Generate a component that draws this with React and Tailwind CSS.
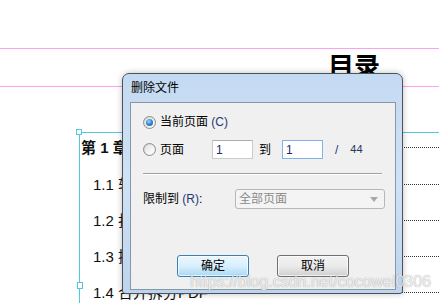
import React from 'react';

const cjk = "font-['Liberation_Sans','Noto_Sans_CJK_SC',sans-serif]";

function Radio({ checked }) {
  return (
    <div className="w-[13px] h-[13px] rounded-full border border-[#8b8e91] bg-gradient-to-br from-[#cfd1d3] to-[#fbfbfb] flex items-center justify-center shrink-0">
      <div className="w-[9px] h-[9px] rounded-full bg-gradient-to-br from-[#e4e4e4] to-[#ffffff] flex items-center justify-center">
        {checked && (
          <div className="w-[7px] h-[7px] rounded-full bg-[radial-gradient(circle_at_40%_35%,#9fd4ff_0%,#3a8ad4_45%,#144f8c_100%)]" />
        )}
      </div>
    </div>
  );
}

function TocRow({ label, bold, indent, className }) {
  return (
    <div className={`flex items-center ${className}`}>
      <span className={`whitespace-nowrap text-[15px] leading-none text-[#111] ${bold ? 'font-bold' : ''} ${indent ? 'pl-[13px]' : 'pl-[1px]'}`}>
        {label}
      </span>
      <div className="flex-1 ml-[4px] border-t border-dotted border-[#333]" />
    </div>
  );
}

export default function App() {
  return (
    <div className={`relative w-[439px] h-[303px] overflow-hidden bg-white ${cjk}`}>
      {/* document page behind the dialog */}
      <div className="pt-[48px]">
        <div className="h-px bg-[#ff9ff0]" />
        <div className="h-[37px] pl-[328px] pt-[5px]">
          <span className="text-[26px] font-bold leading-none text-black">目录</span>
        </div>
        <div className="h-px bg-[#ff9ff0]" />
        <div className="relative mt-[45px] ml-[79px] border-t border-l border-[#4fc8e0]">
          <TocRow label="第 1 章  软件概述" bold className="h-[29px]" />
          <TocRow label="1.1 软件介绍" indent className="h-[36px] mt-[4px]" />
          <TocRow label="1.2 打开PDF文件" indent className="h-[36px]" />
          <TocRow label="1.3 插入删除页面" indent className="h-[36px]" />
          <TocRow label="1.4 合并拆分PDF" indent className="h-[36px]" />
          <div className="absolute -left-[4px] -top-[4px] w-[6px] h-[6px] border border-[#4fc8e0] bg-white" />
          <div className="absolute -left-[3px] top-[149px] w-[6px] h-[7px] border border-[#4fc8e0] bg-white" />
        </div>
      </div>

      {/* delete pages dialog */}
      <div className="absolute left-[122px] top-[73px] w-[281px] h-[221px] flex flex-col rounded-t-[7px] rounded-b-[3px] border border-[#4d5259] bg-gradient-to-b from-[#c4daf2] via-[#cfe2f6] to-[#bcd4ee] shadow-[0_0_6px_rgba(0,0,0,0.25)]">
        <div className="h-[28px] pl-[8px] flex items-center text-[12px] text-black">删除文件</div>
        <div className="ml-[7px] mr-[6px] h-[188px] border border-[#8797a8] bg-[#f0f0f0] pl-[12px] pt-[9px] text-[12px] text-black">
          <div className="h-[20px] flex items-center gap-[4px]">
            <Radio checked />
            <span>当前页面 <span className="text-[#1f3778]">(C)</span></span>
          </div>

          <div className="mt-[8px] h-[19px] flex items-center">
            <div className="w-[69px] flex items-center gap-[4px]">
              <Radio />
              <span>页面</span>
            </div>
            <div className="w-[41px] h-[19px] border border-[#c9cbcf] border-t-[#abadb3] bg-white pl-[3px] flex items-center text-[#1a2a66]">1</div>
            <span className="ml-[6px]">到</span>
            <div className="ml-[11px] w-[41px] h-[19px] border border-[#7eb4ea] bg-white pl-[3px] flex items-center text-[#1a2a66]">1</div>
            <span className="ml-[12px] text-[#1f3778]">/</span>
            <span className="ml-[12px] text-[11px] text-[#26375a]">44</span>
          </div>

          <div className="mt-[14px] w-[239px] h-px bg-[#a0a0a0]" />
          <div className="w-[239px] h-px bg-white" />

          <div className="mt-[14px] h-[20px] flex items-center">
            <span className="w-[92px]">限制到 <span className="text-[#1f3778]">(R)</span>:</span>
            <div className="w-[150px] h-[20px] rounded-[3px] border border-[#b4b8bb] bg-[#f4f4f4] pl-[3px] pr-[6px] flex items-center justify-between text-[#8a8a8a]">
              <span>全部页面</span>
              <svg width="8" height="5" viewBox="0 0 8 5"><path d="M0 0h8L4 5z" fill="#a9a9a9" /></svg>
            </div>
          </div>

          <div className="mt-[46px] flex">
            <button className="ml-[34px] w-[72px] h-[22px] rounded-[3px] border border-[#3c7fb1] bg-gradient-to-b from-[#eaf6fd] via-[#d9f0fc] to-[#a7d9f5] shadow-[inset_0_0_0_1px_rgba(255,255,255,0.7)] text-[12px] text-black">
              确定
            </button>
            <button className="ml-[28px] w-[72px] h-[22px] rounded-[3px] border border-[#707070] bg-gradient-to-b from-[#f2f2f2] via-[#ebebeb] to-[#cfcfcf] shadow-[inset_0_0_0_1px_rgba(255,255,255,0.7)] text-[12px] text-black">
              取消
            </button>
          </div>
        </div>
      </div>

      {/* watermark */}
      <div className="absolute left-[190px] top-[274px] text-[16px] leading-none font-['Liberation_Sans',sans-serif] text-[rgba(255,255,255,0.85)] [text-shadow:0_0_1px_rgba(0,0,0,0.45)] whitespace-nowrap">
        https://blog.csdn.net/cocowei0306
      </div>
    </div>
  );
}
